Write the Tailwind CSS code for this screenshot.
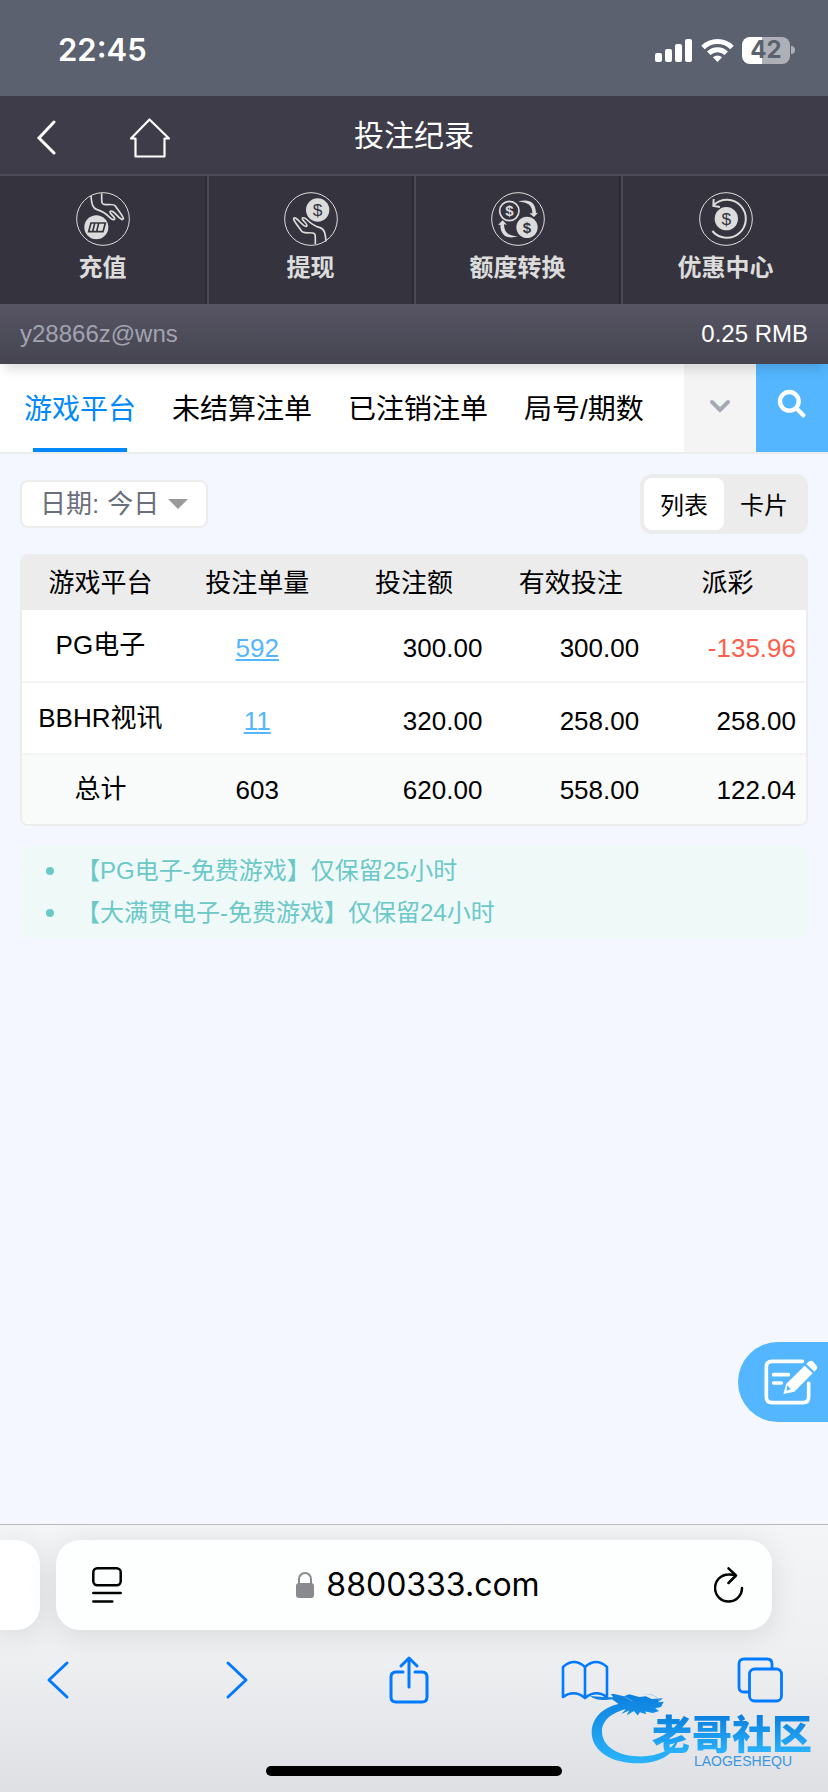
<!DOCTYPE html>
<html lang="zh-CN">
<head>
  <meta charset="UTF-8">
  <meta name="viewport" content="width=device-width, initial-scale=1.0">
  <title>投注纪录</title>
  <script src="https://cdn.jsdelivr.net/npm/@tailwindcss/browser@4"></script>
</head>
<body class="min-h-screen flex flex-col bg-[#f4f7ff] text-black overflow-x-hidden font-['Liberation_Sans','Noto_Sans_CJK_SC',sans-serif]">

  <!-- Status bar -->
  <div class="h-24 pt-1 pl-[58px] pr-[33px] flex items-center justify-between bg-[#5b616e] text-white font-['Inter',sans-serif]">
    <span class="text-[31px] leading-10 font-semibold">22:45</span>
    <div class="flex items-center gap-2">
      <svg class="w-[38px] h-6" viewBox="0 0 38 24" fill="currentColor">
        <rect x="0" y="15" width="7" height="9" rx="2"/>
        <rect x="10" y="11" width="7" height="13" rx="2"/>
        <rect x="20" y="6" width="7" height="18" rx="2"/>
        <rect x="30" y="1" width="7" height="23" rx="2"/>
      </svg>
      <svg class="w-[33px] h-6" viewBox="0 0 33 24" fill="none" stroke="currentColor" stroke-width="5">
        <path d="M2 9.500a20.500 20.500 0 0 1 29 0"/>
        <path d="M7.800 15.300a12.300 12.300 0 0 1 17.400 0"/>
        <path d="M16.500 24l-4.600-4.700a6.500 6.500 0 0 1 9.200 0z" fill="currentColor" stroke="none"/>
      </svg>
      <div class="flex items-center gap-px">
        <div class="w-12 h-[27px] rounded-lg flex items-center justify-center bg-linear-to-r from-white from-42% to-[#adb0b7] to-42% text-[#5b616e] text-2xl font-bold">42</div>
        <div class="w-1 h-2 rounded-r-full bg-[#adb0b7]"></div>
      </div>
    </div>
  </div>

  <header class="relative z-10 shadow-[0_10px_10px_-4px_rgba(0,0,0,0.12)]">
    <div class="relative h-20 pt-1.5 pl-9 flex items-center gap-[72px] bg-[#3d3c48] border-b-2 border-[#4b4a58] text-white">
      <button type="button" aria-label="返回">
        <svg class="w-[22px] h-9" viewBox="0 0 22 36" fill="none" stroke="currentColor" stroke-width="3" stroke-linecap="round"><path d="M18 2L3 18l15 15"/></svg>
      </button>
      <a href="#" aria-label="首页">
        <svg class="w-10 h-10" viewBox="0 0 40 40" fill="none" stroke="currentColor" stroke-width="2.200" stroke-linejoin="round"><path d="M19.500 1.500L1 20.500h4.500V38.500h29V20.500h4.500z"/></svg>
      </a>
      <h1 class="absolute inset-x-40 top-5 text-center text-[30px] leading-10">投注纪录</h1>
    </div>

    <nav class="grid grid-cols-4 bg-[#35343e] text-[#dcdcdc] text-2xl font-bold">
      <a href="#" class="h-32 pt-4 flex flex-col items-center border-r-2 border-[#2c2b33]">
        <svg class="w-[54px] h-[54px]" viewBox="0 0 162 162" fill="none" stroke="currentColor" stroke-width="5">
          <circle cx="81" cy="81" r="79" stroke-width="3"/>
          <path d="M45 12c2 22 4 37 18 41c18 5 28 13 38 23c8 8 16 9 15 3c-3-7-15-14-14-20c4-6 13 3 21 11c8 9 19 18 19 9c-2-9-16-25-24-37c-5-7-16-3-34-5c-8-1-7-8-7-33"/>
          <circle cx="61" cy="106" r="36" fill="currentColor" stroke="none"/>
          <path d="M45 93h43l-7 26H38zM56 94l-6 24M68 94l-6 24" stroke="#35343e" stroke-width="5"/>
        </svg>
        <span class="leading-[44px]">充值</span>
      </a>
      <a href="#" class="h-32 pt-4 flex flex-col items-center border-l-2 border-l-[#4b4a58] border-r-2 border-r-[#2c2b33]">
        <svg class="w-[54px] h-[54px]" viewBox="0 0 162 162" fill="none" stroke="currentColor" stroke-width="5">
          <circle cx="81" cy="81" r="79" stroke-width="3"/>
          <path transform="rotate(180 85.500 80)" d="M45 12c2 22 4 37 18 41c18 5 28 13 38 23c8 8 16 9 15 3c-3-7-15-14-14-20c4-6 13 3 21 11c8 9 19 18 19 9c-2-9-16-25-24-37c-5-7-16-3-34-5c-8-1-7-8-7-33"/>
          <circle cx="101" cy="54" r="35" fill="currentColor" stroke="none"/>
          <text x="101" y="72" text-anchor="middle" font-size="52" font-weight="400" fill="#35343e" stroke="none">$</text>
        </svg>
        <span class="leading-[44px]">提现</span>
      </a>
      <a href="#" class="h-32 pt-4 flex flex-col items-center border-l-2 border-l-[#4b4a58] border-r-2 border-r-[#2c2b33]">
        <svg class="w-[54px] h-[54px]" viewBox="0 0 162 162" fill="none" stroke="currentColor" stroke-width="5">
          <circle cx="81" cy="81" r="79" stroke-width="3"/>
          <circle cx="55" cy="57" r="29"/>
          <text x="55" y="73" text-anchor="middle" font-size="45" font-weight="700" fill="currentColor" stroke="none">$</text>
          <circle cx="108" cy="106" r="32" fill="currentColor" stroke="none"/>
          <text x="108" y="122" text-anchor="middle" font-size="45" font-weight="700" fill="#35343e" stroke="none">$</text>
          <path d="M81 29c28-9 53-3 54 34l6-1-12 13-14-11 9 0c0-25-13-34-43-35z" fill="currentColor" stroke="none"/>
          <path d="M81 133c-28 9-53 1-53-35l-7 1 14-14 13 13-9-1c1 28 16 35 42 36z" fill="currentColor" stroke="none"/>
        </svg>
        <span class="leading-[44px]">额度转换</span>
      </a>
      <a href="#" class="h-32 pt-4 flex flex-col items-center border-l-2 border-[#4b4a58]">
        <svg class="w-[54px] h-[54px]" viewBox="0 0 162 162" fill="none" stroke="currentColor" stroke-width="5">
          <circle cx="81" cy="81" r="79" stroke-width="3"/>
          <path d="M40 117A57 57 0 1 0 44 39M44 21l-1 21 20 3" stroke-width="6"/>
          <circle cx="82" cy="80" r="35" fill="currentColor" stroke="none"/>
          <text x="82" y="98" text-anchor="middle" font-size="52" font-weight="400" fill="#35343e" stroke="none">$</text>
        </svg>
        <span class="leading-[44px]">优惠中心</span>
      </a>
    </nav>

    <div class="h-[60px] px-5 flex items-center justify-between bg-linear-to-b from-[#575564] to-[#454450] text-2xl">
      <span class="text-[#a2a3b1]">y28866z@wns</span>
      <span class="text-white">0.25 RMB</span>
    </div>
  </header>

  <!-- Report tabs -->
  <div class="flex h-[90px] bg-white border-b-2 border-[#ececec]">
    <nav class="flex-1 pl-6 flex gap-9 overflow-hidden whitespace-nowrap text-[28px] leading-[92px]">
      <a href="#" class="relative text-[#0088ff]">游戏平台<span class="absolute bottom-0 inset-x-[9px] h-1 bg-[#0088ff]"></span></a>
      <a href="#">未结算注单</a>
      <a href="#">已注销注单</a>
      <a href="#">局号/期数</a>
    </nav>
    <button type="button" aria-label="更多" class="w-[72px] pb-1 flex items-center justify-center bg-[#f4f4f4]">
      <svg class="w-6 h-4" viewBox="0 0 24 16" fill="none" stroke="#a5abb5" stroke-width="4" stroke-linecap="round"><path d="M4 4l8 8 8-8"/></svg>
    </button>
    <button type="button" aria-label="搜索" class="w-[72px] pb-2 flex items-center justify-center bg-[#53b6ff]">
      <svg class="w-[30px] h-[30px]" viewBox="0 0 90 90" fill="none" stroke="#fff" stroke-width="13" stroke-linecap="round"><circle cx="37" cy="37" r="28"/><path d="M58 58l21 21"/></svg>
    </button>
  </div>

  <main class="relative flex-1 px-5 pt-5">
    <div class="flex items-center justify-between">
      <label class="h-12 px-[18px] flex items-center gap-2 bg-white border-2 border-[#ececec] rounded-lg text-[26px] text-[#6b6e7b]">
        日期:
        <select class="appearance-none bg-transparent">
          <option>今日</option>
        </select>
        <svg class="w-5 h-[10px]" viewBox="0 0 20 10" fill="#999"><path d="M0 0h20L10 10z"/></svg>
      </label>
      <div class="p-1 flex bg-[#ececec] rounded-xl text-2xl">
        <button type="button" class="w-20 h-[52px] pt-1 rounded-lg bg-white">列表</button>
        <button type="button" class="w-20 h-[52px] pt-1 rounded-lg">卡片</button>
      </div>
    </div>

    <div class="mt-5 border-2 border-t-0 border-[#ececec] rounded-lg overflow-hidden">
      <table class="w-full table-fixed text-[26px]">
        <thead class="bg-[#ececec]">
          <tr class="h-14">
            <th class="pt-0.5 font-normal">游戏平台</th>
            <th class="pt-0.5 font-normal">投注单量</th>
            <th class="pt-0.5 font-normal">投注额</th>
            <th class="pt-0.5 font-normal">有效投注</th>
            <th class="pt-0.5 font-normal">派彩</th>
          </tr>
        </thead>
        <tbody class="bg-white text-right">
          <tr class="h-[72px] border-b-2 border-[#f4f4f4]">
            <td class="text-center">PG电子</td>
            <td class="pt-1.5 text-center"><a href="#" class="text-[#53b6ff] underline">592</a></td>
            <td class="pt-1.5 pr-[10px]">300.00</td>
            <td class="pt-1.5 pr-[10px]">300.00</td>
            <td class="pt-1.5 pr-[10px] text-[#ff5f4a]">-135.96</td>
          </tr>
          <tr class="h-[72px] border-b-2 border-[#f4f4f4]">
            <td class="text-center whitespace-nowrap">BBHR视讯</td>
            <td class="pt-1.5 text-center"><a href="#" class="text-[#53b6ff] underline">11</a></td>
            <td class="pt-1.5 pr-[10px]">320.00</td>
            <td class="pt-1.5 pr-[10px]">258.00</td>
            <td class="pt-1.5 pr-[10px]">258.00</td>
          </tr>
          <tr class="h-[70px] bg-[#f9fbfa]">
            <td class="text-center">总计</td>
            <td class="pt-0.5 text-center">603</td>
            <td class="pt-0.5 pr-[10px]">620.00</td>
            <td class="pt-0.5 pr-[10px]">558.00</td>
            <td class="pt-0.5 pr-[10px]">122.04</td>
          </tr>
        </tbody>
      </table>
    </div>

    <ul class="mt-5 py-1 pl-[26px] rounded-lg bg-[#eff9f8] text-[#6bc8c8] text-2xl leading-[42px]">
      <li class="flex items-center gap-[22px]"><span class="w-2 h-2 rounded-full bg-current"></span>【PG电子-免费游戏】仅保留25小时</li>
      <li class="flex items-center gap-[22px]"><span class="w-2 h-2 rounded-full bg-current"></span>【大满贯电子-免费游戏】仅保留24小时</li>
    </ul>

    <!-- Feedback button -->
    <button type="button" aria-label="意见反馈" class="absolute right-0 bottom-[102px] w-[90px] h-20 pl-4 flex items-center justify-center bg-[#53b6ff] rounded-l-full">
      <svg class="w-[54px] h-12" viewBox="0 0 162 144" fill="none" stroke="#fff" stroke-width="11" stroke-linecap="round">
        <path d="M115 10H24Q7 10 7 27V117Q7 134 24 134H117Q134 134 134 117V76M29 50h44M29 75h23"/>
        <path d="M122 23l24 23-55 55-33 7 9-31z" fill="#fff" stroke="none"/>
        <path d="M127 18l8-8q6-4 11 0l12 13q4 5 0 10l-7 8z" fill="#fff" stroke="none"/>
        <path d="M69 82l12 12-13 4z" fill="#53b6ff" stroke="none"/>
      </svg>
    </button>
  </main>

  <!-- Browser bar -->
  <footer class="relative h-[268px] pt-[15px] overflow-hidden border-t border-[#b9b9bf] bg-linear-to-b from-[#f4f5f7] via-[#eeeff1] via-50% to-[#dfe0e4]">
    <div class="flex gap-4 pr-14">
      <div class="w-10 h-[90px] rounded-r-3xl bg-white shadow-[0_4px_30px_rgba(0,0,0,0.1)]"></div>
      <div class="flex-1 h-[90px] pl-9 pr-7 flex items-center justify-between rounded-3xl bg-[#fdfefe] shadow-[0_4px_30px_rgba(0,0,0,0.1)]">
        <button type="button" aria-label="页面菜单">
          <svg class="w-[30px] h-9" viewBox="0 0 30 36" fill="none" stroke="#000" stroke-width="2.500" stroke-linecap="round"><rect x="1.300" y="1.300" width="27.400" height="17" rx="4"/><path d="M1.300 26h27.400M1.300 34.500h19"/></svg>
        </button>
        <button type="button" class="flex items-center gap-3 font-['Inter',sans-serif] text-[32px] leading-10">
          <svg class="w-[18px] h-[26px]" viewBox="0 0 18 26" fill="none"><rect y="11" width="18" height="15" rx="3" fill="#8a898f"/><path d="M3 12V7a6 6 0 0 1 12 0v5" stroke="#8a898f" stroke-width="2"/></svg>
          8800333.com
        </button>
        <button type="button" aria-label="刷新">
          <svg class="w-[30px] h-9" viewBox="0 0 30 36" fill="none" stroke="#000" stroke-width="2.500" stroke-linecap="round" stroke-linejoin="round"><path d="M28 21a13.500 13.500 0 1 1-13.500-13.500q3.500-.3 7 1M14.500 1.300l7.500 7.200-7.500 7.500"/></svg>
        </button>
      </div>
    </div>

    <div class="pt-5 pl-[18px] pr-7 flex justify-between text-[#007aff]">
      <button type="button" aria-label="后退" class="w-20 h-[60px] flex items-center justify-center">
        <svg class="w-6 h-10" viewBox="0 0 24 40" fill="none" stroke="currentColor" stroke-width="3" stroke-linecap="round" stroke-linejoin="round"><path d="M21 3L3 20l18 17"/></svg>
      </button>
      <button type="button" aria-label="前进" class="w-20 h-[60px] pl-1.5 flex items-center justify-center">
        <svg class="w-6 h-10" viewBox="0 0 24 40" fill="none" stroke="currentColor" stroke-width="3" stroke-linecap="round" stroke-linejoin="round"><path d="M3 3l18 17L3 37"/></svg>
      </button>
      <button type="button" aria-label="分享" class="w-20 h-[60px] flex items-center justify-center">
        <svg class="w-10 h-[50px]" viewBox="0 0 40 50" fill="none" stroke="currentColor" stroke-width="3" stroke-linecap="round" stroke-linejoin="round"><path d="M14 17H7q-5 0-5 5v20q0 5 5 5h26q5 0 5-5V22q0-5-5-5h-7M20 32V3M12 11l8-8 8 8"/></svg>
      </button>
      <button type="button" aria-label="书签" class="w-20 h-[60px] flex items-center justify-center">
        <svg class="w-12 h-10" viewBox="0 0 48 40" fill="none" stroke="currentColor" stroke-width="2.600" stroke-linecap="round" stroke-linejoin="round"><path d="M24 7v31Q13 29 2 37V7Q13-3 24 7Q35-3 46 7v30Q35 29 24 38"/></svg>
      </button>
      <button type="button" aria-label="标签页" class="w-20 h-[60px] flex items-center justify-center">
        <svg class="w-[46px] h-[46px]" viewBox="0 0 46 46" fill="none" stroke="currentColor" stroke-width="2.800"><rect x="12.500" y="12" width="32" height="32" rx="5"/><path d="M12 35H7q-5 0-5-5V7q0-5 5-5h23q5 0 5 5v4"/></svg>
      </button>
    </div>

    <div class="absolute bottom-4 inset-x-0 mx-auto w-[296px] h-[10px] rounded-full bg-black"></div>

    <!-- Community logo -->
    <div class="absolute right-4 bottom-6 w-56 h-[74px]">
      <svg class="absolute left-0 top-0 w-[93px] h-[73px]" viewBox="0 0 280 220">
        <defs>
          <linearGradient id="ring" x1="0" y1="0" x2="0" y2="1"><stop offset="0" stop-color="#0b7fdd"/><stop offset="1" stop-color="#2ab4fc"/></linearGradient>
        </defs>
        <path fill="url(#ring)" d="M92 30C40 42 11 75 11 116C11 171 70 209 150 209C215 209 262 183 272 135C250 170 210 188 160 188C90 188 42 158 42 112C42 78 75 55 114 46l-14 14 24-10-8 15 22-14 12 14 6-10 20 6-4-8 24 4 18-6-12-8 18-4 8-16-18 2 16-12-34 2-18-8-20 2-30-8-16 6-42-10 10 13-20 0-50-4c10 10 40 16 66 10z"/>
        <path fill="none" stroke="#7bbcf0" stroke-width="2" d="M110 8l24 14M150-2c25 0 58 2 66 24"/>
      </svg>
      <div class="absolute right-0 top-4 text-right">
        <div class="text-[40px] leading-[44px] font-black font-['Noto_Sans_CJK_SC',sans-serif] bg-linear-to-b from-[#0878da] to-[#2ab4fc] bg-clip-text text-transparent">老哥社区</div>
        <div class="pr-5 text-sm leading-[14px] text-[#3a96e0]">LAOGESHEQU</div>
      </div>
    </div>
  </footer>
</body>
</html>
